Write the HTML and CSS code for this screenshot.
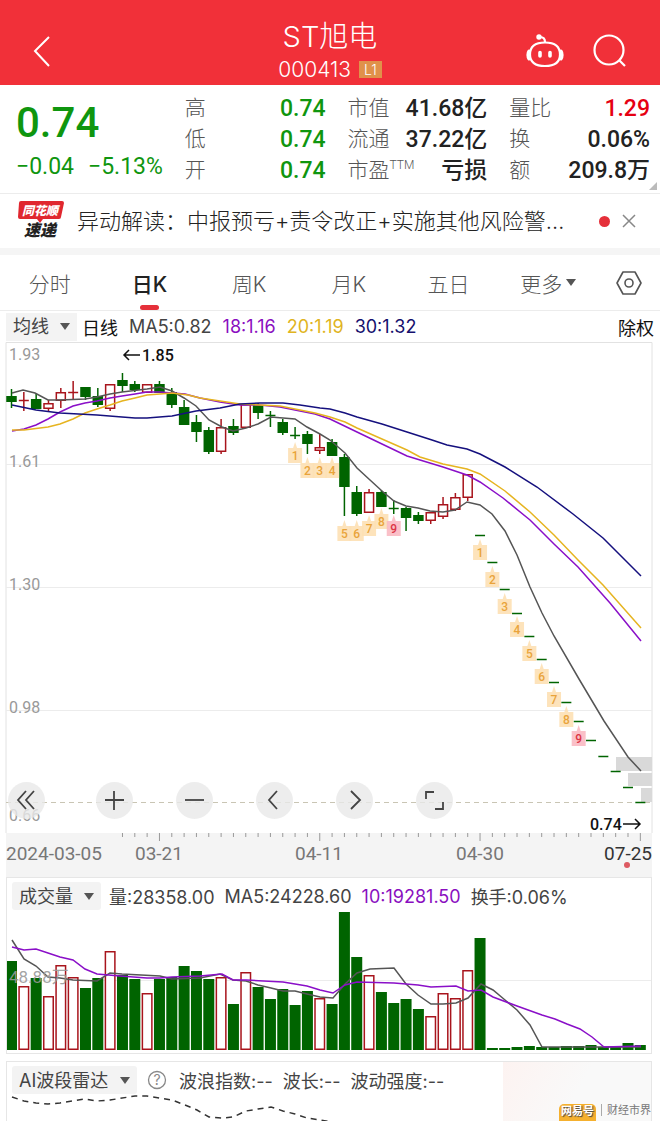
FILE: index.html
```html
<!DOCTYPE html>
<html lang="zh-CN">
<head>
  <meta charset="UTF-8">
  <meta name="viewport" content="width=device-width, initial-scale=1.0">
  <title>ST旭电 000413</title>
  <link rel="stylesheet" href="styles.css">
</head>
<body>
  <header class="header">
    <button class="icon-btn back" aria-label="返回">
      <svg width="20" height="34" viewBox="0 0 20 34"><path d="M17 3 L3 17 L17 32" fill="none" stroke="#fff" stroke-width="2"/></svg>
    </button>
    <div class="title">
      <h1>ST旭电</h1>
      <p>000413 <span class="level">L1</span></p>
    </div>
    <div class="header-icons">
      <button class="icon-btn" aria-label="助手">
        <svg width="38" height="36" viewBox="0 0 38 36" fill="none" stroke="#fff" stroke-width="2.2" stroke-linecap="round">
          <path d="M19 9 C19 6 17 4 14 4"/>
          <circle cx="13" cy="4" r="1.6" fill="#fff"/>
          <path d="M19 9.500 C29 9.500 34 14 34 21.500 C34 29 29 33 19 33 C9 33 4 29 4 21.500 C4 14 9 9.500 19 9.500 Z"/>
          <path d="M3 18 C1.500 20 1.500 24 3 26 M35 18 C36.500 20 36.500 24 35 26" stroke-width="3"/>
          <path d="M14 19.500 V23 M24 19.500 V23" stroke-width="3.600"/>
        </svg>
      </button>
      <button class="icon-btn" aria-label="搜索">
        <svg width="36" height="36" viewBox="0 0 36 36" fill="none" stroke="#fff" stroke-width="2.2">
          <circle cx="17" cy="17" r="14.500"/>
          <path d="M27 27 L33 33"/>
        </svg>
      </button>
    </div>
  </header>

  <section class="quote">
    <div class="price-box">
      <div class="price">0.74</div>
      <div class="change"><span>−0.04</span><span>−5.13%</span></div>
    </div>
    <dl class="stats">
      <div><dt>高</dt><dd class="green">0.74</dd></div>
      <div><dt>低</dt><dd class="green">0.74</dd></div>
      <div><dt>开</dt><dd class="green">0.74</dd></div>
    </dl>
    <dl class="stats">
      <div><dt>市值</dt><dd>41.68亿</dd></div>
      <div><dt>流通</dt><dd>37.22亿</dd></div>
      <div><dt>市盈<sup>TTM</sup></dt><dd>亏损</dd></div>
    </dl>
    <dl class="stats">
      <div><dt>量比</dt><dd class="red">1.29</dd></div>
      <div><dt>换</dt><dd>0.06%</dd></div>
      <div><dt>额</dt><dd>209.8万</dd></div>
    </dl>
    <span class="corner"></span>
  </section>

  <section class="news">
    <svg class="news-logo" width="48" height="44" viewBox="0 0 48 44">
      <path d="M4 2 H45 Q47 2 47 4 L44 18 Q44 20 42 20 H26 L23 24 L20 20 H3 Q1 20 1 18 L2 4 Q2 2 4 2 Z" fill="#e0272f"/>
      <text x="5" y="16" class="logo-top">同花顺</text>
      <text x="7" y="37" class="logo-bottom">速递</text>
    </svg>
    <a href="#" class="news-text">异动解读：中报预亏+责令改正+实施其他风险警…</a>
    <span class="dot"></span>
    <button class="icon-btn" aria-label="关闭">
      <svg width="14" height="14" viewBox="0 0 14 14"><path d="M1 1 L13 13 M13 1 L1 13" stroke="#888" stroke-width="1.5"/></svg>
    </button>
  </section>

  <nav class="tabs">
    <button>分时</button>
    <button class="active">日K</button>
    <button>周K</button>
    <button>月K</button>
    <button>五日</button>
    <button>更多<span class="caret"></span></button>
    <button class="settings" aria-label="设置">
      <svg width="28" height="26" viewBox="0 0 28 26" fill="none" stroke="#555" stroke-width="1.6">
        <path d="M8 2 H20 L26 13 L20 24 H8 L2 13 Z" stroke-linejoin="round"/>
        <circle cx="14" cy="13" r="4"/>
      </svg>
    </button>
  </nav>

  <div class="indicator">
    <span class="select"><select aria-label="指标"><option>均线</option></select></span>
    <span class="black">日线</span>
    <span>MA5:0.82</span>
    <span class="purple">18:1.16</span>
    <span class="yellow">20:1.19</span>
    <span class="navy">30:1.32</span>
    <span class="black right">除权</span>
  </div>

  <section class="k-chart">
    <svg viewBox="0 342 660 535" aria-label="日K">
      <rect x="6" y="833" width="646" height="44" fill="#f4f4f4"/>
      <path d="M6 833 V342.500 H652 V833" class="frame"/>
      <path d="M6 464.500 H652 M6 587.500 H652 M6 710.500 H652" class="grid"/>
      <path d="M6 802.500 H652" stroke="#c9c5b4" stroke-dasharray="5 4"/>
      <path d="M616 757 H652 V771 H616 Z M628 773 H652 V786 H628 Z M641 788 H652 V802 H641 Z" fill="#d9d9d9"/>
      <g id="candles"></g>
      <polyline class="ma5" points="12,393 23,390 35,393 48,400 60,400 85,399 97,397 110,394 122,392 147,389 160,387 172,391 184,398 196,406 209,420 222,427 233,431 246,428 258,424 271,417 295,419 307,427 320,434 330,440 345,453 357,468 370,480 382,491 394,501 406,506 418,508 430,511 443,512 455,510 467,502 480,505 492,514 505,531 517,555 530,587 542,613 554,636 579,679 604,721 628,757 641,771"/>
      <polyline class="ma18" points="12,431 24,429 36,425 48,419 60,412 73,406 85,403 97,401 110,398 122,396 135,394 147,392 160,392 172,393 185,394 200,398 220,402 240,405 260,405 280,407 300,411 315,414 330,419 357,432 382,444 407,456 420,460 443,467 467,475 480,482 503,498 530,520 554,544 578,567 610,603 641,641"/>
      <polyline class="ma20" points="12,430 24,430 48,427 60,424 73,419 85,413 97,409 110,405 122,401 135,398 147,395 160,394 172,393 188,395 200,398 220,401 240,404 260,405 280,406 300,410 315,413 330,417 345,422 357,428 382,439 407,450 420,457 443,464 467,469 480,474 505,491 530,512 554,535 578,560 603,585 641,628"/>
      <polyline class="ma30" points="12,405 36,410 60,413 97,415 122,417 135,418 147,418 172,416 196,411 220,408 240,404 260,403 283,403 300,405 320,408 330,409 345,413 357,417 382,424 407,432 432,440 447,445 467,449 480,454 505,467 537,487 573,514 603,538 625,560 641,576"/>
      <g id="badges"></g>
      <g class="scale">
        <text x="9" y="360">1.93</text>
        <text x="9" y="467">1.61</text>
        <text x="9" y="590">1.30</text>
        <text x="9" y="713">0.98</text>
        <text x="9" y="821">0.66</text>
      </g>
      <g class="mark">
        <path d="M140 355 H124 M129 350 L124 355 L129 360"/>
        <text x="142" y="361">1.85</text>
        <text x="590" y="830">0.74</text>
        <path d="M623 824 H640 M635 819 L640 824 L635 829"/>
      </g>
      <path id="ticks" stroke="#999"/>
      <g class="dates">
        <text x="6" y="860">2024-03-05</text>
        <text x="159" y="860" text-anchor="middle">03-21</text>
        <text x="319" y="860" text-anchor="middle">04-11</text>
        <text x="480" y="860" text-anchor="middle">04-30</text>
        <text x="652" y="860" text-anchor="end" class="today">07-25</text>
      </g>
      <circle cx="627" cy="865" r="3" fill="#dd5a62"/>
    </svg>
    <div class="tools">
      <button aria-label="最早"><svg viewBox="0 0 37 37"><path d="M18 9 L10 18 L18 27 M26 9 L18 18 L26 27"/></svg></button>
      <button aria-label="放大"><svg viewBox="0 0 37 37"><path d="M18 9 V28 M9 18 H28"/></svg></button>
      <button aria-label="缩小"><svg viewBox="0 0 37 37"><path d="M9 18 H28"/></svg></button>
      <button aria-label="前移"><svg viewBox="0 0 37 37"><path d="M21 9 L13 18 L21 27"/></svg></button>
      <button aria-label="后移"><svg viewBox="0 0 37 37"><path d="M15 9 L24 18 L15 27"/></svg></button>
      <button aria-label="全屏"><svg viewBox="0 0 37 37"><path d="M10 17 V10 H18 M27 20 V27 H19"/></svg></button>
    </div>
  </section>

  <section class="panel">
    <div class="panel-head">
      <span class="select"><select aria-label="副图指标"><option>成交量</option></select></span>
      <span>量:28358.00</span>
      <span>MA5:24228.60</span>
      <span class="purple">10:19281.50</span>
      <span>换手:0.06%</span>
    </div>
    <svg viewBox="7 911 644 142" aria-label="成交量">
      <path d="M6 980.500 H652" class="grid"/>
      <g id="volumes"></g>
      <polyline class="ma5" points="12,940 24,959 36,966 48,977 60,978 73,980 97,981 110,973 122,974 160,976 172,979 200,978 220,974 233,980 246,981 258,985 271,988 283,991 295,991 307,994 320,997 333,998 345,984 357,973 370,969 394,968 406,984 418,995 431,1004 443,1004 456,1003 468,998 481,984 493,990 505,1000 517,1010 530,1025 542,1047 641,1047"/>
      <polyline class="ma18" points="12,947 24,950 36,949 48,953 60,957 73,960 85,969 97,974 120,976 147,978 160,978 172,977 200,976 222,974 233,980 246,980 283,982 307,986 320,990 333,993 345,985 357,982 394,983 418,985 431,987 456,986 468,991 481,990 493,997 517,1006 542,1015 555,1019 567,1024 580,1029 592,1037 604,1047 641,1046"/>
      <text x="9" y="983" class="vol-label">48.88万</text>
    </svg>
  </section>

  <section class="panel radar">
    <div class="panel-head">
      <span class="select"><select aria-label="波段指标"><option>AI波段雷达</option></select></span>
      <button class="icon-btn" aria-label="说明">
        <svg width="20" height="20" viewBox="0 0 20 20"><circle cx="10" cy="10" r="8.500" fill="none" stroke="#888" stroke-width="1.300"/><text x="10" y="15" text-anchor="middle" class="help">?</text></svg>
      </button>
      <span>波浪指数:--</span>
      <span>波长:--</span>
      <span>波动强度:--</span>
    </div>
    <svg viewBox="7 1094 644 27" aria-label="波段">
      <polyline points="12,1096 24,1100 36,1102 48,1103 60,1102 85,1098 97,1100 110,1099 135,1095 147,1095 172,1099 185,1104 197,1109 209,1116 222,1117 233,1116 246,1110 258,1108 271,1106 283,1110 295,1113 307,1117 320,1119 333,1121" fill="none" stroke="#333" stroke-width="1.500" stroke-dasharray="6 5"/>
    </svg>
    <div class="watermark">
      <span class="brand">网易号</span><span class="bar"></span><span>财经市界</span>
    </div>
  </section>

  <script src="chart.js"></script>
</body>
</html>
```

FILE: styles.css
```css
* {
  box-sizing: border-box;
}

body {
  margin: 0;
  background: #fff;
  color: #444;
  font-family: Inter, "Noto Sans CJK SC", sans-serif;
  font-size: 18px;
}

h1, p, dl, dd {
  margin: 0;
}

button, select {
  font: inherit;
  color: inherit;
  border: none;
  background: none;
  padding: 0;
  cursor: pointer;
}

svg {
  display: block;
}

/* header */
.header {
  display: grid;
  grid-template-columns: 1fr auto 1fr;
  align-items: center;
  height: 85px;
  padding: 16px 32px 0;
  background: #f13039;
  color: #fff;
}

.icon-btn {
  display: flex;
}

.title {
  text-align: center;
}

.title h1 {
  font-size: 29px;
  font-weight: 300;
  line-height: 38px;
}

.title p {
  display: flex;
  align-items: center;
  justify-content: center;
  gap: 8px;
  font-size: 21px;
  font-weight: 300;
  line-height: 28px;
}

.level {
  padding: 0 5px;
  background: #e0914a;
  font-size: 14px;
  line-height: 17px;
}

.header-icons {
  display: flex;
  justify-content: flex-end;
  gap: 28px;
}

/* quote */
.quote {
  position: relative;
  display: grid;
  grid-template-columns: 146fr 141fr 140fr 141fr;
  gap: 22px;
  height: 109px;
  padding: 8px 10px 0 16px;
  border-bottom: 1px solid #ececec;
  font-family: Roboto, "Noto Sans CJK SC", sans-serif;
}

.price {
  color: #0f960f;
  font-size: 42px;
  font-weight: 500;
  line-height: 60px;
}

.change {
  display: flex;
  gap: 14px;
  color: #0f960f;
  font-size: 23px;
  line-height: 28px;
  white-space: nowrap;
}

.stats div {
  display: flex;
  justify-content: space-between;
  line-height: 31px;
  white-space: nowrap;
}

.stats dt {
  color: #555;
  font-size: 21px;
  font-weight: 300;
}

.stats dd {
  color: #222;
  font-size: 23px;
  font-weight: 500;
}

.stats sup {
  font-size: 12px;
  line-height: 12px;
}

.stats .green {
  color: #0f960f;
}

.stats .red {
  color: #e60012;
}

.corner {
  position: absolute;
  right: 3px;
  bottom: 3px;
  border-left: 8px solid transparent;
  border-bottom: 8px solid #bbb;
}

/* news */
.news {
  display: flex;
  align-items: center;
  height: 61px;
  padding: 0 24px 0 17px;
  border-bottom: 7px solid #f5f5f5;
}

.news-logo {
  flex: none;
  margin-right: 12px;
}

.logo-top, .logo-bottom {
  font-family: "Noto Sans CJK SC", sans-serif;
  font-weight: 900;
  font-style: italic;
}

.logo-top {
  font-size: 12px;
  fill: #fff;
}

.logo-bottom {
  font-size: 16px;
  fill: #222;
}

.news-text {
  flex: 1;
  color: #222;
  font-size: 22px;
  font-weight: 300;
  line-height: 36px;
  text-decoration: none;
  white-space: nowrap;
}

.dot {
  width: 11px;
  height: 11px;
  margin: 0 12px 0 10px;
  border-radius: 50%;
  background: #e5303a;
}

/* tabs */
.tabs {
  display: flex;
  height: 56px;
  border-bottom: 1px solid #ececec;
}

.tabs button {
  position: relative;
  display: flex;
  flex: 1;
  align-items: center;
  justify-content: center;
  color: #555;
  font-size: 21px;
  font-weight: 300;
}

.tabs .active {
  color: #222;
  font-weight: 500;
}

.tabs .active::after {
  content: "";
  position: absolute;
  bottom: 0;
  width: 19px;
  height: 5px;
  border-radius: 3px;
  background: #e5303a;
}

.tabs .settings {
  flex: none;
  width: 62px;
}

.caret, .select::after {
  border: 5px solid transparent;
  border-top: 7px solid #555;
  border-bottom: none;
}

.caret {
  margin-left: 4px;
}

/* indicator rows */
.indicator, .panel-head {
  display: flex;
  align-items: center;
  white-space: nowrap;
}

.indicator {
  gap: 11px;
  height: 31px;
  padding: 0 6px;
}

.select {
  position: relative;
  display: flex;
  align-items: center;
  height: 28px;
  background: #f3f3f3;
}

.select::after {
  content: "";
  position: absolute;
  right: 7px;
  pointer-events: none;
}

.select select {
  appearance: none;
  padding: 0 28px 0 7px;
}

.indicator .select {
  margin-right: -6px;
}

.right {
  margin-left: auto;
}

.black {
  color: #111;
}

.purple {
  color: #8a0fc0;
}

.yellow {
  color: #e0b422;
}

.navy {
  color: #15106e;
}

/* charts */
.k-chart {
  position: relative;
}

.frame {
  fill: none;
  stroke: #e2e2e2;
}

.grid {
  fill: none;
  stroke: #ececec;
}

.ma5, .ma18, .ma20, .ma30 {
  fill: none;
  stroke-width: 1.5;
}

.ma5 {
  stroke: #555;
}

.ma18 {
  stroke: #8a0fc8;
}

.ma20 {
  stroke: #e6b420;
}

.ma30 {
  stroke: #15107e;
}

.scale, .dates, .mark, .badge {
  font-family: Roboto, sans-serif;
}

.scale {
  fill: #999;
  font-size: 16px;
}

.dates {
  fill: #777;
  font-size: 19px;
}

.dates .today {
  fill: #333;
}

.mark text {
  fill: #111;
  font-size: 16px;
  font-weight: 500;
}

.mark path {
  fill: none;
  stroke: #111;
  stroke-width: 1.5;
}

.up {
  fill: #fff;
  stroke: #a8141c;
  stroke-width: 1.5;
}

.down {
  fill: #006400;
}

.wick-up {
  stroke: #a8141c;
  stroke-width: 1.5;
}

.wick-down {
  stroke: #006400;
  stroke-width: 1.5;
}

.badge {
  font-size: 12px;
  font-weight: 500;
  text-anchor: middle;
  fill: #e9a33a;
}

.badge path {
  fill: #fde0b4;
}

.badge.nine {
  fill: #dc3545;
}

.badge.nine path {
  fill: #f9b9c2;
}

.vol-label {
  fill: #999;
  fill-opacity: 0.9;
  font-family: Roboto, "Noto Sans CJK SC", sans-serif;
  font-size: 17px;
}

.tools {
  position: absolute;
  left: 8px;
  bottom: 58px;
  display: flex;
  gap: 43px;
}

.tools button {
  width: 37px;
  height: 37px;
  border-radius: 50%;
  background: rgba(232, 232, 232, 0.8);
}

.tools button:first-child {
  margin-right: 8px;
}

.tools path {
  fill: none;
  stroke: #444;
  stroke-width: 1.8;
}

/* lower panels */
.panel {
  position: relative;
  margin: 0 8px 7px 6px;
  border: 1px solid #e6e6e6;
}

.panel-head {
  gap: 10px;
  height: 33px;
  padding: 3px 5px 0;
}

.panel-head .select {
  margin-right: -2px;
  border-radius: 3px;
}

.radar {
  margin-bottom: 0;
  border-bottom: none;
  overflow: hidden;
}

.radar .icon-btn {
  margin: 0 2px;
}

.help {
  fill: #888;
  font-size: 14px;
}

.watermark {
  position: absolute;
  right: 0;
  bottom: 0;
  display: flex;
  align-items: center;
  gap: 5px;
  width: 148px;
  height: 60px;
  padding: 36px 0 0 56px;
  background: linear-gradient(120deg, #fdf3f1, #f9f9f9 50%);
  color: #777;
  font-size: 11px;
  line-height: 18px;
  white-space: nowrap;
}

.watermark .brand {
  align-self: stretch;
  margin-top: 6px;
  padding: 0 2px;
  border-radius: 5px 5px 0 0;
  background: #f5b02e;
  color: #fff;
  font-weight: 700;
  line-height: 14px;
  text-shadow: 1px 1px 1px #444;
}

.watermark .bar {
  width: 1px;
  height: 12px;
  background: #aaa;
}
```

FILE: chart.js
```js
const STEP = 12.33;
const FIRST = 11.5;
const center = i => FIRST + STEP * i;

// [direction, body top, body bottom, high, low]
const candles = [
  ['d', 396, 401, 389, 408], ['u', 400, 400, 392, 411], ['d', 399, 408, 393, 408], ['u', 403, 408, 400, 412],
  ['u', 392, 400, 388, 408], ['u', 392, 392, 381, 399], ['d', 387, 396, 387, 400], ['d', 396, 404, 388, 407],
  ['u', 384, 408, 384, 411], ['d', 380, 385, 373, 392], ['d', 384, 389, 381, 392], ['u', 384, 392, 384, 392],
  ['d', 384, 392, 381, 392], ['d', 392, 404, 388, 408], ['d', 407, 424, 400, 424], ['d', 422, 431, 415, 442],
  ['d', 430, 451, 427, 454], ['u', 427, 451, 419, 454], ['d', 426, 432, 419, 435], ['u', 404, 427, 404, 427],
  ['d', 405, 412, 403, 419], ['d', 415, 415, 411, 427], ['d', 422, 432, 419, 435], ['d', 435, 435, 427, 439],
  ['d', 434, 443, 431, 454], ['u', 447, 450, 434, 454], ['d', 442, 455, 439, 455], ['d', 457, 486, 454, 516],
  ['d', 492, 513, 486, 516], ['u', 492, 512, 489, 512], ['d', 492, 506, 490, 506], ['d', 508, 508, 500, 514],
  ['d', 508, 517, 507, 531], ['d', 515, 520, 512, 524], ['u', 512, 520, 512, 524], ['u', 504, 516, 497, 519],
  ['u', 497, 509, 493, 511], ['u', 474, 497, 474, 501], ['d', 535, 535, 535, 535], ['d', 562, 562, 562, 562],
  ['d', 589, 589, 589, 589], ['d', 613, 613, 613, 613], ['d', 636, 636, 636, 636], ['d', 659, 659, 659, 659],
  ['d', 682, 682, 682, 682], ['d', 702, 702, 702, 702], ['d', 721, 721, 721, 721], ['d', 740, 740, 740, 740],
  ['d', 756, 756, 756, 756], ['d', 771, 771, 771, 771], ['d', 787, 787, 787, 787], ['d', 802, 802, 802, 802]
];

// [candle, number, top]
const badges = [
  [23, 1, 448], [24, 2, 463], [25, 3, 463], [26, 4, 463], [27, 5, 526], [28, 6, 526], [29, 7, 521], [30, 8, 514], [31, 9, 521],
  [38, 1, 545], [39, 2, 572], [40, 3, 599], [41, 4, 622], [42, 5, 646], [43, 6, 669], [44, 7, 692], [45, 8, 712], [46, 9, 731]
];

const volumes = [
  961, 986, 978, 996, 965, 977, 988, 978, 951, 975, 979, 993, 979, 977, 966, 971, 979, 977, 1004, 972, 987, 999, 989,
  1005, 991, 998, 1004, 912, 957, 975, 992, 1003, 999, 1009, 1016, 993, 998, 970, 938, 1048, 1048, 1047, 1046, 1047,
  1047, 1046, 1046, 1045, 1047, 1047, 1043, 1045
];
const BASE = 1050;

function bar(dir, x, top, bottom, width) {
  if (dir === 'u') {
    return `<rect class="up" x="${x - width / 2 + 0.75}" y="${top + 0.75}" width="${width - 1.5}" height="${bottom - top - 1.5}"/>`;
  }
  return `<rect class="down" x="${x - width / 2}" y="${top}" width="${width}" height="${bottom - top}"/>`;
}

document.getElementById('candles').innerHTML = candles.map(([dir, top, bottom, high, low], i) => {
  const x = center(i);
  const name = dir === 'u' ? 'wick-up' : 'wick-down';
  const wick = `<path class="${name}" d="M${x} ${high} V${low}"/>`;
  if (top === bottom) {
    return wick + `<path class="${name}" d="M${x - 5} ${top + 0.5} h10"/>`;
  }
  return wick + bar(dir, x, top, bottom + 1, 10.5);
}).join('');

document.getElementById('badges').innerHTML = badges.map(([i, n, top]) => {
  const x = center(i);
  return `<g class="badge${n === 9 ? ' nine' : ''}">
    <path d="M${x - 7} ${top} h5 l2 -6 l2 6 h5 v15 h-14 z" opacity="0.9"/>
    <text x="${x}" y="${top + 12}">${n}</text></g>`;
}).join('');

document.getElementById('volumes').innerHTML = volumes.map((top, i) => bar(candles[i][0], center(i), top, BASE, 11)).join('');

let ticks = '';
for (let i = 9; i < candles.length; i++) {
  ticks += `M${center(i)} 833 v${i % 13 === 12 ? 8 : 4} `;
}
document.getElementById('ticks').setAttribute('d', ticks);
```
